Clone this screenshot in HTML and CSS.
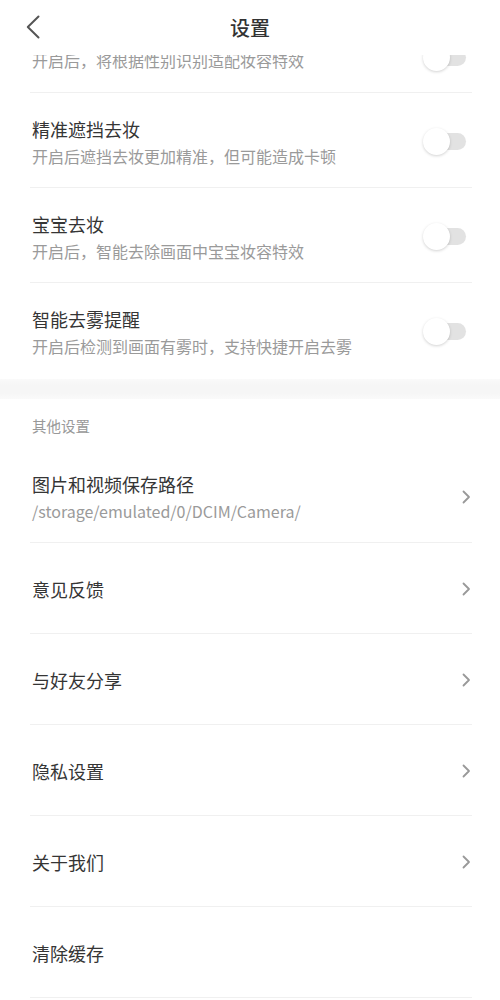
FILE: index.html
```html
<!DOCTYPE html>
<html lang="zh-CN">
<head>
<meta charset="utf-8">
<title>设置</title>
<link rel="stylesheet" href="styles.css">
</head>
<body>
<header class="header">
  <div class="back">
    <svg width="14" height="24" viewBox="0 0 14 24"><polyline points="12.5,1.5 1.8,12 12.5,22.5" fill="none" stroke="#555" stroke-width="2" stroke-linecap="round" stroke-linejoin="round"/></svg>
  </div>
  <div class="title">设置</div>
  <div></div>
</header>

<div class="group">
  <div class="row two cut">
    <div class="text"><div class="desc">开启后，将根据性别识别适配妆容特效</div></div>
    <div class="switch"></div>
  </div>
  <div class="row two">
    <div class="text"><div class="name">精准遮挡去妆</div><div class="desc">开启后遮挡去妆更加精准，但可能造成卡顿</div></div>
    <div class="switch"></div>
  </div>
  <div class="row two">
    <div class="text"><div class="name">宝宝去妆</div><div class="desc">开启后，智能去除画面中宝宝妆容特效</div></div>
    <div class="switch"></div>
  </div>
  <div class="row two last">
    <div class="text"><div class="name">智能去雾提醒</div><div class="desc">开启后检测到画面有雾时，支持快捷开启去雾</div></div>
    <div class="switch"></div>
  </div>
</div>

<div class="band"></div>

<div class="section">其他设置</div>

<div class="group">
  <div class="row two">
    <div class="text"><div class="name">图片和视频保存路径</div><div class="desc path">/storage/emulated/0/DCIM/Camera/</div></div>
    <svg class="chev" width="9" height="14" viewBox="0 0 9 14"><polyline points="1.5,1.5 7,7 1.5,12.5" fill="none" stroke="#999" stroke-width="1.8" stroke-linecap="round" stroke-linejoin="round"/></svg>
  </div>
  <div class="row one">
    <div class="text"><div class="name">意见反馈</div></div>
    <svg class="chev" width="9" height="14" viewBox="0 0 9 14"><polyline points="1.5,1.5 7,7 1.5,12.5" fill="none" stroke="#999" stroke-width="1.8" stroke-linecap="round" stroke-linejoin="round"/></svg>
  </div>
  <div class="row one">
    <div class="text"><div class="name">与好友分享</div></div>
    <svg class="chev" width="9" height="14" viewBox="0 0 9 14"><polyline points="1.5,1.5 7,7 1.5,12.5" fill="none" stroke="#999" stroke-width="1.8" stroke-linecap="round" stroke-linejoin="round"/></svg>
  </div>
  <div class="row one">
    <div class="text"><div class="name">隐私设置</div></div>
    <svg class="chev" width="9" height="14" viewBox="0 0 9 14"><polyline points="1.5,1.5 7,7 1.5,12.5" fill="none" stroke="#999" stroke-width="1.8" stroke-linecap="round" stroke-linejoin="round"/></svg>
  </div>
  <div class="row one">
    <div class="text"><div class="name">关于我们</div></div>
    <svg class="chev" width="9" height="14" viewBox="0 0 9 14"><polyline points="1.5,1.5 7,7 1.5,12.5" fill="none" stroke="#999" stroke-width="1.8" stroke-linecap="round" stroke-linejoin="round"/></svg>
  </div>
  <div class="row one">
    <div class="text"><div class="name">清除缓存</div></div>
  </div>
</div>
</body>
</html>
```

FILE: styles.css
```css
html, body {
  margin: 0;
  padding: 0;
  background: #ffffff;
}
body {
  font-family: "Noto Sans CJK SC", "Noto Sans", sans-serif;
  color: #333333;
  overflow: hidden;
}
.header {
  position: relative;
  z-index: 2;
  height: 55px;
  padding: 2px 0 3px;
  box-sizing: border-box;
  background: #ffffff;
  display: grid;
  grid-template-columns: 1fr auto 1fr;
  align-items: center;
}
.back {
  padding-left: 26px;
  display: flex;
}
.title {
  font-size: 20px;
  line-height: 24px;
  font-weight: 500;
  color: #333333;
  margin-top: 2px;
}
.group {
  margin: 0 28px 0 30px;
}
.row {
  display: flex;
  align-items: center;
  border-bottom: 1px solid #f0f0f0;
}
.row.two {
  padding: 24px 0 20px;
}
.row.one {
  padding: 34px 0 32px;
}
.row.last {
  border-bottom: none;
  padding-bottom: 21px;
}
.row.cut {
  margin-top: -59px;
  padding-top: 48px;
}
.text {
  flex: 1;
  padding-left: 2px;
}
.name {
  font-size: 18px;
  line-height: 24px;
  color: #353535;
}
.desc {
  font-size: 16px;
  line-height: 22px;
  color: #9a9a9a;
  margin-top: 4px;
}
.switch {
  position: relative;
  width: 43px;
  height: 28px;
  margin-right: 6px;
}
.switch::before {
  content: "";
  position: absolute;
  left: 8px;
  right: 0;
  top: 5px;
  height: 17px;
  border-radius: 9px;
  background: #e2e2e2;
}
.switch::after {
  content: "";
  position: absolute;
  left: 0;
  top: 0;
  width: 27px;
  height: 27px;
  border-radius: 50%;
  background: #ffffff;
  box-shadow: 0 1px 3px rgba(0, 0, 0, 0.18);
}
.chev {
  margin-right: 1px;
  flex: none;
}
.band {
  height: 20px;
  margin-top: 1px;
  background: linear-gradient(#fafafa, #f6f6f6 30%, #f6f6f6 70%, #fafafa);
}
.section {
  padding: 17px 0 12px 32px;
  font-size: 14.5px;
  line-height: 20px;
  color: #999999;
}
```
